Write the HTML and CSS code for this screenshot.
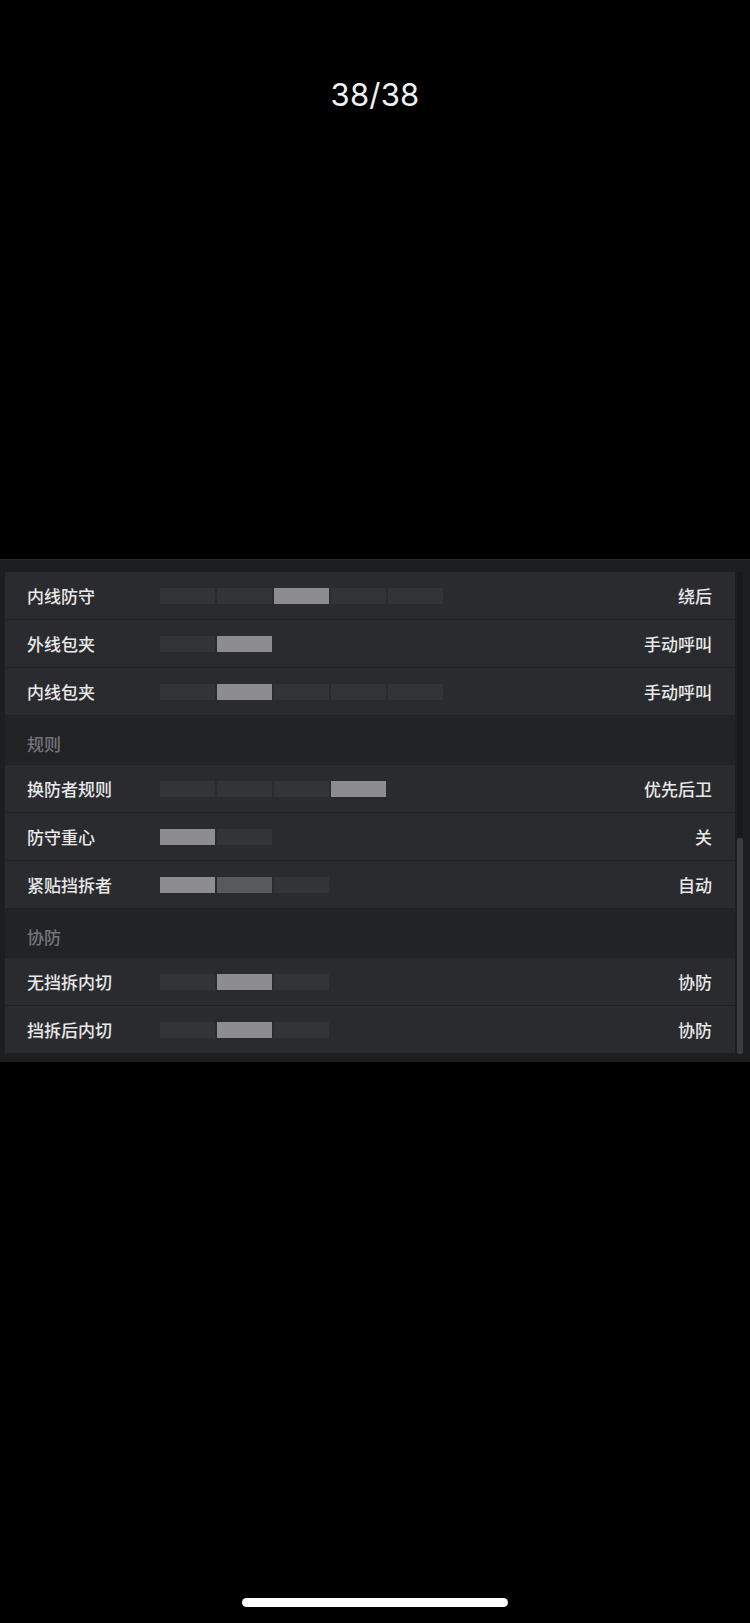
FILE: index.html
```html
<!DOCTYPE html>
<html lang="zh-CN">
<head>
<meta charset="utf-8">
<title>38/38</title>
<link rel="stylesheet" href="styles.css">
</head>
<body>
<div class="screen">
  <div class="top">
    <div class="counter">38/38</div>
  </div>
  <div class="panel">
    <div class="list">
      <div class="row">
        <span class="label">内线防守</span>
        <div class="bar"><i class="seg"></i><i class="seg"></i><i class="seg on"></i><i class="seg"></i><i class="seg"></i></div>
        <span class="value">绕后</span>
      </div>
      <div class="row">
        <span class="label">外线包夹</span>
        <div class="bar"><i class="seg"></i><i class="seg on"></i></div>
        <span class="value">手动呼叫</span>
      </div>
      <div class="row">
        <span class="label">内线包夹</span>
        <div class="bar"><i class="seg"></i><i class="seg on"></i><i class="seg"></i><i class="seg"></i><i class="seg"></i></div>
        <span class="value">手动呼叫</span>
      </div>
      <div class="section">规则</div>
      <div class="row">
        <span class="label">换防者规则</span>
        <div class="bar"><i class="seg"></i><i class="seg"></i><i class="seg"></i><i class="seg on"></i></div>
        <span class="value">优先后卫</span>
      </div>
      <div class="row">
        <span class="label">防守重心</span>
        <div class="bar"><i class="seg on"></i><i class="seg"></i></div>
        <span class="value">关</span>
      </div>
      <div class="row">
        <span class="label">紧贴挡拆者</span>
        <div class="bar"><i class="seg on"></i><i class="seg mid"></i><i class="seg"></i></div>
        <span class="value">自动</span>
      </div>
      <div class="section">协防</div>
      <div class="row">
        <span class="label">无挡拆内切</span>
        <div class="bar"><i class="seg"></i><i class="seg on"></i><i class="seg"></i></div>
        <span class="value">协防</span>
      </div>
      <div class="row">
        <span class="label">挡拆后内切</span>
        <div class="bar"><i class="seg"></i><i class="seg on"></i><i class="seg"></i></div>
        <span class="value">协防</span>
      </div>
    </div>
    <div class="scrollbar"><div class="thumb"></div></div>
  </div>
  <div class="bottom">
    <div class="home-indicator"></div>
  </div>
</div>
</body>
</html>
```

FILE: styles.css
```css
html, body {
  margin: 0;
  padding: 0;
  background: #000;
}
.screen {
  width: 750px;
  height: 1623px;
  display: flex;
  flex-direction: column;
  background: #000;
  font-family: "Noto Sans CJK SC", "Noto Sans", sans-serif;
}
.top {
  height: 560px;
  display: flex;
  justify-content: center;
  padding-top: 74px;
  box-sizing: border-box;
}
.counter {
  font-family: "Inter", "Roboto", sans-serif;
  font-weight: 400;
  font-size: 31px;
  line-height: 42px;
  color: #f2f2f2;
  letter-spacing: 0.2px;
}
.panel {
  height: 502px;
  background: #1d1e20;
  display: flex;
  box-sizing: border-box;
  padding: 12px 7px 8px 5px;
  gap: 2px;
  box-shadow: 0 -1px 0 #26272a;
}
.list {
  width: 730px;
  display: flex;
  flex-direction: column;
  gap: 1px;
  background: #1f2022;
}
.row {
  height: 47px;
  background: #2a2b2e;
  display: flex;
  align-items: center;
  padding: 0 23px 0 22px;
  box-sizing: border-box;
}
.label {
  width: 133px;
  font-size: 17px;
  font-weight: 500;
  color: #e8e8e8;
  line-height: 20px;
  flex: none;
}
.bar {
  display: flex;
  gap: 2px;
  flex: 1;
}
.seg {
  display: block;
  width: 55px;
  height: 16px;
  background: #323437;
}
.seg.on {
  background: #8d8d8f;
}
.seg.mid {
  background: #58595b;
}
.value {
  font-size: 17px;
  font-weight: 500;
  color: #e8e8e8;
  line-height: 20px;
  flex: none;
}
.section {
  height: 48px;
  background: #222325;
  display: flex;
  align-items: center;
  padding: 6px 22px 0;
  box-sizing: border-box;
  font-size: 17px;
  font-weight: 500;
  color: #74757a;
}
.scrollbar {
  width: 6px;
  background: #18191b;
  display: flex;
  flex-direction: column;
  padding-top: 266px;
  box-sizing: border-box;
}
.thumb {
  flex: 1;
  background: #3b3c3f;
  border-radius: 2px;
}
.bottom {
  flex: 1;
  display: flex;
  justify-content: center;
  align-items: flex-end;
  padding-bottom: 16px;
}
.home-indicator {
  width: 266px;
  height: 9px;
  border-radius: 5px;
  background: #ffffff;
}
```
